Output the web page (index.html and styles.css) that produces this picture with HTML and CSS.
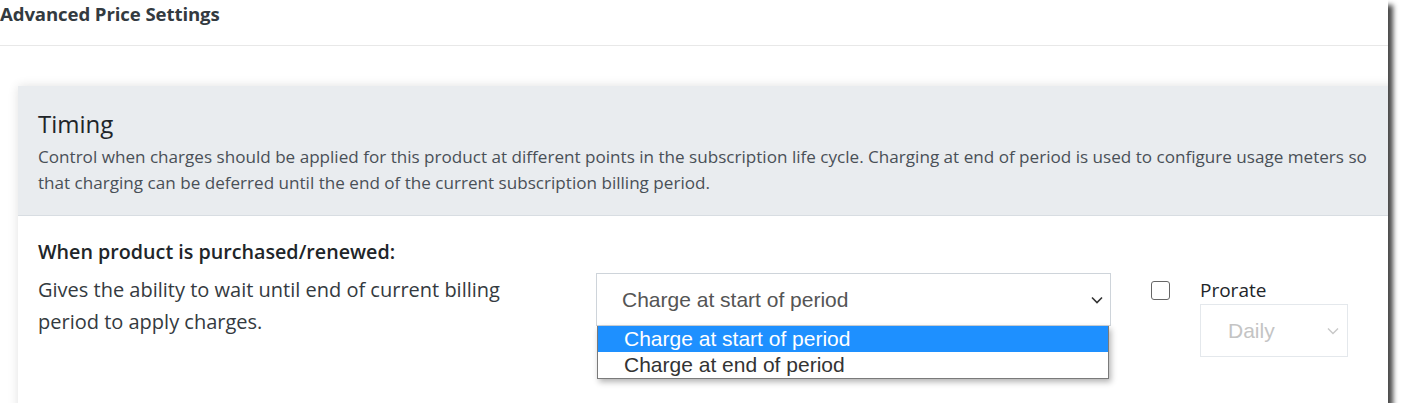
FILE: index.html
```html
<!DOCTYPE html>
<html>
<head>
<meta charset="utf-8">
<link rel="stylesheet" href="styles.css">
</head>
<body>
<div class="shot">
  <div class="page-header">Advanced Price Settings</div>
  <div class="card">
    <div class="card-header">
      <h2 class="card-title">Timing</h2>
      <p class="card-desc">Control when charges should be applied for this product at different points in the subscription life cycle. Charging at end of period is used to configure usage meters so that charging can be deferred until the end of the current subscription billing period.</p>
    </div>
    <div class="card-body">
      <div class="field-label">When product is purchased/renewed:</div>
      <div class="field-row">
        <div class="field-help">Gives the ability to wait until end of current billing period to apply charges.</div>
        <div class="select-wrap">
          <div class="select">
            <span>Charge at start of period</span>
            <svg class="chev" width="12" height="8" viewBox="0 0 12 8"><path d="M1 1.5 L6 6.5 L11 1.5" fill="none" stroke="#333" stroke-width="1.6"/></svg>
          </div>
          <ul class="options">
            <li class="opt active">Charge at start of period</li>
            <li class="opt">Charge at end of period</li>
          </ul>
        </div>
        <div class="check-col"><span class="checkbox"></span></div>
        <div class="prorate-col">
          <div class="prorate-label">Prorate</div>
          <div class="select small disabled">
            <span>Daily</span>
            <svg class="chev" width="12" height="8" viewBox="0 0 12 8"><path d="M1 1.5 L6 6.5 L11 1.5" fill="none" stroke="#c8c8c8" stroke-width="1.4"/></svg>
          </div>
        </div>
      </div>
    </div>
  </div>
</div>
</body>
</html>
```
FILE: styles.css
```css
* { box-sizing: border-box; }
html, body { margin: 0; padding: 0; background: #fff; }
body { font-family: "Open Sans", "Noto Sans", sans-serif; color: #212529; }

.shot {
  width: 1388px;
  height: 403px;
  background: #fff;
  overflow: hidden;
  box-shadow: 5px 5px 5px rgba(0, 0, 0, 0.72);
}

.page-header {
  height: 46px;
  padding: 2px 0 0 0;
  font-size: 18.6px;
  line-height: 24px;
  font-weight: 700;
  color: #333a40;
  letter-spacing: -0.1px;
  border-bottom: 1px solid #e8e8e8;
}

.card {
  margin: 40px 0 0 18px;
  width: 1400px;
  height: 340px;
  background: #fff;
  box-shadow: 0 0 10px rgba(0, 0, 0, 0.12);
}

.card-header {
  height: 130px;
  background: #e9ecef;
  border-bottom: 1px solid #d8dde2;
  padding: 18px 20px 0 20px;
}

.card-title {
  margin: 0;
  font-size: 24px;
  font-weight: 400;
  line-height: 40px;
  color: #212529;
}

.card-desc {
  margin: 0;
  width: 1345px;
  font-size: 17.1px;
  line-height: 26px;
  color: #495057;
}

.card-body {
  padding: 22px 20px 0 20px;
}

.field-label {
  font-size: 19.7px;
  font-weight: 600;
  line-height: 28px;
  color: #212529;
}

.field-row {
  display: flex;
  align-items: flex-start;
  margin-top: 7px;
}

.field-help {
  width: 500px;
  font-size: 20px;
  line-height: 32px;
  color: #343a40;
  padding-top: 1px;
}

.select-wrap {
  position: relative;
  margin-left: 58px;
  width: 515px;
}

.select {
  display: flex;
  align-items: center;
  justify-content: space-between;
  height: 53px;
  border: 1px solid #ced4da;
  background: #fff;
  padding: 0 6px 0 25px;
  font-family: "Liberation Sans", Arial, sans-serif;
  font-size: 21px;
  color: #555;
}

.chev { margin-right: 1px; }

.options {
  position: absolute;
  top: 53px;
  left: 1px;
  width: 512px;
  margin: 0;
  padding: 0;
  list-style: none;
  background: #fff;
  border: 1px solid #7a7a7a;
  border-top: none;
  box-shadow: 2px 3px 6px rgba(0, 0, 0, 0.3);
  font-family: "Liberation Sans", Arial, sans-serif;
  font-size: 21px;
}

.opt {
  height: 26px;
  line-height: 25px;
  padding-left: 26px;
  color: #333;
}

.opt.active {
  background: #1e90ff;
  color: #fff;
}

.check-col {
  margin-left: 40px;
  padding-top: 8px;
}

.checkbox {
  display: block;
  width: 19px;
  height: 19px;
  border: 1.5px solid #666;
  border-radius: 3px;
  background: #fff;
}

.prorate-col {
  margin-left: 30px;
  margin-top: 3px;
}

.prorate-label {
  font-size: 19px;
  line-height: 28px;
  color: #212529;
}

.select.small {
  width: 148px;
  height: 53px;
  padding: 0 7px 0 27px;
  border-color: #e4e8ec;
  color: #c4c4c4;
}
```
